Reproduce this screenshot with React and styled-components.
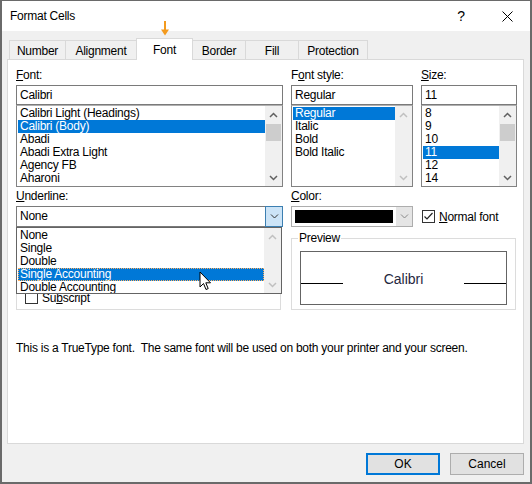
import styled, { createGlobalStyle } from "styled-components";

const GlobalStyle = createGlobalStyle`
  html, body { margin: 0; padding: 0; background: #fff; }
  body {
    font-family: "Liberation Sans", Arial, sans-serif;
    font-size: 12px;
    letter-spacing: -0.25px;
    color: #000;
  }
  * { box-sizing: border-box; }
`;

const Window = styled.div`
  position: relative;
  width: 532px;
  height: 484px;
  border: 2px solid #6a6a6a;
  border-top-width: 1px;
  display: flex;
  flex-direction: column;
  background: #f0f0f0;
`;

const TitleBar = styled.div`
  height: 30px;
  flex: none;
  display: flex;
  align-items: center;
  background: #fff;
  padding-left: 8px;
`;

const TitleText = styled.span`
  font-size: 12px;
`;

const TitleButtons = styled.div`
  margin-left: auto;
  display: flex;
  height: 100%;
`;

const TitleButton = styled.div`
  width: 46px;
  height: 100%;
  display: flex;
  align-items: center;
  justify-content: center;
  font-size: 14px;
`;

const Marker = styled.svg`
  position: absolute;
  left: 158px;
  top: 19px;
`;

const Body = styled.div`
  flex: 1;
  display: flex;
  flex-direction: column;
  padding: 7px 6px 7px 5px;
`;

const TabStrip = styled.div`
  height: 21px;
  display: flex;
  align-items: flex-end;
  padding-left: 3px;
  position: relative;
  z-index: 1;
`;

const Tab = styled.div`
  width: ${(p) => p.$w}px;
  height: ${(p) => (p.$active ? 22 : 19)}px;
  margin-left: -1px;
  margin-bottom: ${(p) => (p.$active ? -1 : 0)}px;
  border: 1px solid #d9d9d9;
  border-bottom: none;
  background: ${(p) => (p.$active ? "#fff" : "#f0f0f0")};
  position: relative;
  z-index: ${(p) => (p.$active ? 2 : 1)};
  display: flex;
  justify-content: center;
  align-items: center;
  padding-top: ${(p) => (p.$active ? 1 : 2)}px;
`;

const Panel = styled.div`
  height: 385px;
  flex: none;
  background: #fff;
  border: 1px solid #d9d9d9;
  padding: 8px 6px 0 8px;
`;

const Grid = styled.div`
  display: grid;
  grid-template-columns: 267px 122px 96px;
  column-gap: 8px;
  row-gap: 2px;
  align-items: start;
`;

const Field = styled.div`
  position: relative;
  display: flex;
  flex-direction: column;
`;

const Label = styled.div`
  line-height: 15px;
  height: 15px;
  margin-bottom: 2px;
  white-space: nowrap;
`;

const TextBox = styled.div`
  height: 20px;
  border: 1px solid #7a7a7a;
  padding: 0 3px;
  line-height: 18px;
  background: #fff;
`;

const ListBox = styled.div`
  height: 82px;
  border: 1px solid #828282;
  border-top-color: #b0b0b0;
  display: flex;
  background: #fff;
`;

const Items = styled.div`
  flex: 1;
  padding: 1px 0 0 1px;
  overflow: hidden;
`;

const Row = styled.div`
  height: 13px;
  line-height: 13px;
  padding-left: 2px;
  white-space: nowrap;
  background: ${(p) => (p.$selected ? "#0078d7" : "transparent")};
  color: ${(p) => (p.$selected ? "#fff" : "#000")};
  outline: ${(p) => (p.$focus ? "1px dotted #ffb060" : "none")};
  outline-offset: -1px;
`;

const ScrollTrack = styled.div`
  width: 17px;
  flex: none;
  background: #f0f0f0;
  display: flex;
  flex-direction: column;
`;

const ScrollButton = styled.div`
  height: 17px;
  flex: none;
  display: flex;
  align-items: center;
  justify-content: center;
`;

const Thumb = styled.div`
  height: 17px;
  margin: 1px 1px 0;
  background: #cdcdcd;
`;

const Spacer = styled.div`
  flex: 1;
`;

const Dropdown = styled.div`
  height: 21px;
  border: 1px solid ${(p) => (p.$muted ? "#adadad" : "#7a7a7a")};
  display: flex;
  background: #fff;
`;

const DropValue = styled.div`
  flex: 1;
  padding-left: 3px;
  line-height: 19px;
`;

const Swatch = styled.div`
  flex: 1;
  margin: 3px;
  background: #000;
`;

const DropButton = styled.div`
  width: ${(p) => (p.$focus ? 18 : 16)}px;
  flex: none;
  display: flex;
  align-items: center;
  justify-content: center;
  background: ${(p) => (p.$focus ? "#cce4f7" : "#e5e5e5")};
  border: ${(p) => (p.$focus ? "1px solid #3c7fb1" : "none")};
  margin: ${(p) => (p.$focus ? "-1px -1px -1px 0" : "0")};
`;

const Popup = styled.div`
  position: absolute;
  top: 100%;
  left: 0;
  width: 266px;
  height: 67px;
  border: 1px solid #646464;
  background: #fff;
  display: flex;
  z-index: 5;
`;

const Cursor = styled.svg`
  position: absolute;
  left: 182px;
  top: 43px;
`;

const CheckCell = styled.div`
  height: 38px;
  display: flex;
  align-items: flex-end;
`;

const CheckRow = styled.div`
  height: ${(p) => p.$h || 15}px;
  display: flex;
  align-items: center;
  gap: 4px;
  padding-left: ${(p) => p.$indent || 0}px;
  white-space: nowrap;
`;

const Box = styled.div`
  width: 13px;
  height: 13px;
  border: 1px solid #333;
  background: #fff;
  display: flex;
  align-items: center;
  justify-content: center;
`;

const Group = styled.fieldset`
  margin: 2px 0 0;
  min-width: 0;
  width: ${(p) => p.$w || "auto"};
  height: 79px;
  border: 1px solid #dcdcdc;
  padding: 0 8px 4px;
  grid-column: ${(p) => p.$span || "auto"};
  display: flex;
  flex-direction: column;
`;

const Legend = styled.legend`
  padding: 0 1px;
  margin-left: -2px;
  line-height: 15px;
`;

const EffectRows = styled.div`
  margin-top: auto;
  display: flex;
  flex-direction: column;
  gap: 5px;
`;

const PreviewBox = styled.div`
  margin-top: 5px;
  height: 54px;
  border: 1px solid #646464;
  display: flex;
  justify-content: space-between;
  align-items: center;
`;

const Baseline = styled.div`
  width: 42px;
  height: 1px;
  background: #000;
  align-self: flex-start;
  margin-top: 31px;
`;

const PreviewText = styled.span`
  font-family: "Liberation Sans", Arial, sans-serif;
  font-size: 14px;
  letter-spacing: 0;
  color: #1f2740;
  margin-top: 1px;
`;

const Note = styled.p`
  margin: 31px 0 0;
  line-height: 15px;
  white-space: pre;
`;

const Footer = styled.div`
  display: flex;
  justify-content: flex-end;
  gap: 10px;
  padding-top: 9px;
`;

const Button = styled.button`
  width: 74px;
  height: 22px;
  font: inherit;
  color: #000;
  background: #e1e1e1;
  border: ${(p) => (p.$default ? "2px solid #0078d7" : "1px solid #adadad")};
  padding: 0;
`;

const Chevron = ({ up, color = "#606060" }) => (
  <svg width="9" height="6" viewBox="0 0 9 6">
    <polyline
      points={up ? "1,5 4.5,1.5 8,5" : "1,1 4.5,4.5 8,1"}
      fill="none"
      stroke={color}
      strokeWidth="1.5"
    />
  </svg>
);

const SmallChevron = ({ color }) => (
  <svg width="9" height="5" viewBox="0 0 9 5">
    <polyline points="1,0.5 4.5,4 8,0.5" fill="none" stroke={color} strokeWidth="1" />
  </svg>
);

const Scrollbar = ({ disabled, thumb }) => {
  const c = disabled ? "#c0c0c0" : "#606060";
  return (
    <ScrollTrack>
      <ScrollButton>
        <Chevron up color={c} />
      </ScrollButton>
      {thumb && <Thumb />}
      <Spacer />
      <ScrollButton>
        <Chevron color={c} />
      </ScrollButton>
    </ScrollTrack>
  );
};

const List = ({ items, selected, disabled, thumb }) => (
  <ListBox>
    <Items>
      {items.map((it) => (
        <Row key={it} $selected={it === selected}>
          {it}
        </Row>
      ))}
    </Items>
    <Scrollbar disabled={disabled} thumb={thumb} />
  </ListBox>
);

const Check = ({ checked }) => (
  <Box>
    {checked && (
      <svg width="11" height="11" viewBox="0 0 11 11">
        <polyline points="1.5,5.5 4,8 9.5,2" fill="none" stroke="#222" strokeWidth="1.2" />
      </svg>
    )}
  </Box>
);

const fonts = [
  "Calibri Light (Headings)",
  "Calibri (Body)",
  "Abadi",
  "Abadi Extra Light",
  "Agency FB",
  "Aharoni",
];
const styles = ["Regular", "Italic", "Bold", "Bold Italic"];
const sizes = ["8", "9", "10", "11", "12", "14"];
const underlines = ["None", "Single", "Double", "Single Accounting", "Double Accounting"];
const tabs = [
  ["Number", 57],
  ["Alignment", 72],
  ["Font", 57],
  ["Border", 54],
  ["Fill", 54],
  ["Protection", 70],
];

export default function App() {
  return (
    <>
      <GlobalStyle />
      <Window>
        <TitleBar>
          <TitleText>Format Cells</TitleText>
          <TitleButtons>
            <TitleButton>?</TitleButton>
            <TitleButton>
              <svg width="11" height="11" viewBox="0 0 11 11">
                <path d="M0.5 0.5 L10.5 10.5 M10.5 0.5 L0.5 10.5" stroke="#000" strokeWidth="1" />
              </svg>
            </TitleButton>
          </TitleButtons>
        </TitleBar>

        <Marker width="10" height="16" viewBox="0 0 10 16">
          <rect x="4" y="1" width="2" height="10" fill="#f39a1e" />
          <polygon points="1,9.5 9,9.5 5,15.5" fill="#f39a1e" />
        </Marker>

        <Body>
          <TabStrip>
            {tabs.map(([t, w]) => (
              <Tab key={t} $w={w} $active={t === "Font"}>
                {t}
              </Tab>
            ))}
          </TabStrip>

          <Panel>
            <Grid>
              <Field>
                <Label>
                  <u>F</u>ont:
                </Label>
                <TextBox>Calibri</TextBox>
                <List items={fonts} selected="Calibri (Body)" thumb />
              </Field>
              <Field>
                <Label>
                  F<u>o</u>nt style:
                </Label>
                <TextBox>Regular</TextBox>
                <List items={styles} selected="Regular" disabled />
              </Field>
              <Field>
                <Label>
                  <u>S</u>ize:
                </Label>
                <TextBox>11</TextBox>
                <List items={sizes} selected="11" thumb />
              </Field>

              <Field>
                <Label>
                  <u>U</u>nderline:
                </Label>
                <Dropdown>
                  <DropValue>None</DropValue>
                  <DropButton $focus>
                    <SmallChevron color="#333" />
                  </DropButton>
                </Dropdown>
                <Popup>
                  <Items>
                    {underlines.map((u) => (
                      <Row key={u} $selected={u === "Single Accounting"} $focus={u === "Single Accounting"}>
                        {u}
                      </Row>
                    ))}
                  </Items>
                  <Scrollbar disabled />
                  <Cursor width="13" height="21" viewBox="0 0 13 21">
                    <path
                      d="M1 1 L1 16 L4.5 12.5 L7 18.5 L9.2 17.6 L6.8 11.8 L11.5 11.8 Z"
                      fill="#fff"
                      stroke="#000"
                      strokeWidth="1"
                    />
                  </Cursor>
                </Popup>
              </Field>
              <Field>
                <Label>
                  <u>C</u>olor:
                </Label>
                <Dropdown $muted>
                  <Swatch />
                  <DropButton>
                    <SmallChevron color="#888" />
                  </DropButton>
                </Dropdown>
              </Field>
              <CheckCell>
                <CheckRow $h={21} $indent={1}>
                  <Check checked />
                  <span>
                    <u>N</u>ormal font
                  </span>
                </CheckRow>
              </CheckCell>

              <Group $w="265px">
                <EffectRows>
                  <CheckRow>
                    <Check />
                    <span>
                      Su<u>b</u>script
                    </span>
                  </CheckRow>
                </EffectRows>
              </Group>
              <Group $span="2 / 4" $w="225px">
                <Legend>Preview</Legend>
                <PreviewBox>
                  <Baseline />
                  <PreviewText>Calibri</PreviewText>
                  <Baseline />
                </PreviewBox>
              </Group>
            </Grid>

            <Note>This is a TrueType font.  The same font will be used on both your printer and your screen.</Note>
          </Panel>

          <Footer>
            <Button $default>OK</Button>
            <Button>Cancel</Button>
          </Footer>
        </Body>
      </Window>
    </>
  );
}
